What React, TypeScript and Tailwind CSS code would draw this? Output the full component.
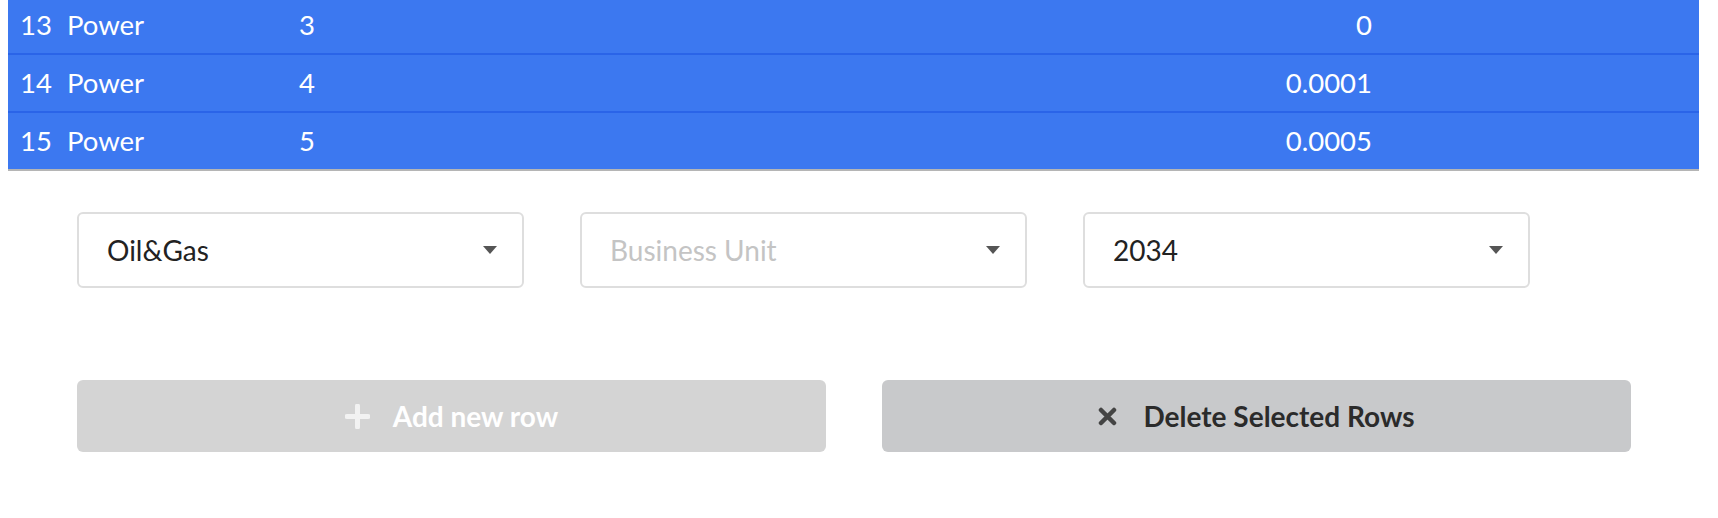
import React from "react";

const rows = [
  { id: 13, name: "Power", qty: 3, value: "0" },
  { id: 14, name: "Power", qty: 4, value: "0.0001" },
  { id: 15, name: "Power", qty: 5, value: "0.0005" },
];

function Caret() {
  return (
    <svg width="14" height="8" viewBox="0 0 14 8" className="shrink-0">
      <path d="M0 0h14L7 8z" fill="#555" />
    </svg>
  );
}

function Select({ value, placeholder }: { value?: string; placeholder?: string }) {
  return (
    <div className="flex h-[76px] w-[447px] items-center justify-between rounded-[6px] border-2 border-[#dedede] bg-white pl-[28px] pr-[25px]">
      <span className={value ? "text-[#222]" : "text-[#c4c4c4]"}>{value ?? placeholder}</span>
      <Caret />
    </div>
  );
}

export default function App() {
  return (
    <div className="min-h-screen overflow-hidden bg-white font-['Lato','Liberation_Sans',sans-serif]">
      <div className="-mt-[3px] ml-2 w-[1691px] text-[27.5px] text-white">
        {rows.map((r, i) => (
          <div
            key={r.id}
            className={
              "flex h-[58px] items-center bg-[#3c78f0] " +
              (i === rows.length - 1 ? "border-b-2 border-[#b5b5b5]" : "border-b-2 border-[#2a64e8]")
            }
          >
            <div className="w-[59px] pl-[12px]">{r.id}</div>
            <div className="w-[232px]">{r.name}</div>
            <div className="w-[200px]">{r.qty}</div>
            <div className="w-[873px] text-right">{r.value}</div>
          </div>
        ))}
      </div>

      <div className="ml-[77px] mt-[41px] flex gap-[56px] text-[28px]">
        <Select value="Oil&Gas" />
        <Select placeholder="Business Unit" />
        <Select value="2034" />
      </div>

      <div className="ml-[77px] mt-[92px] flex gap-[56px] text-[28px] font-bold">
        <button className="flex h-[72px] w-[749px] items-center justify-center gap-[23px] rounded-[6px] bg-[#d4d4d4] text-white">
          <svg width="25" height="25" viewBox="0 0 25 25">
            <path d="M12.5 2v21M2 12.5h21" stroke="#f2f2f2" strokeWidth="5" strokeLinecap="round" />
          </svg>
          <span>Add new row</span>
        </button>
        <button className="flex h-[72px] w-[749px] items-center justify-center gap-[26px] rounded-[6px] bg-[#c8c9cb] text-[#2b2b2b]">
          <svg width="19" height="19" viewBox="0 0 19 19">
            <path d="M3 3l13 13M16 3L3 16" stroke="#444" strokeWidth="4.5" strokeLinecap="round" />
          </svg>
          <span>Delete Selected Rows</span>
        </button>
      </div>
    </div>
  );
}
